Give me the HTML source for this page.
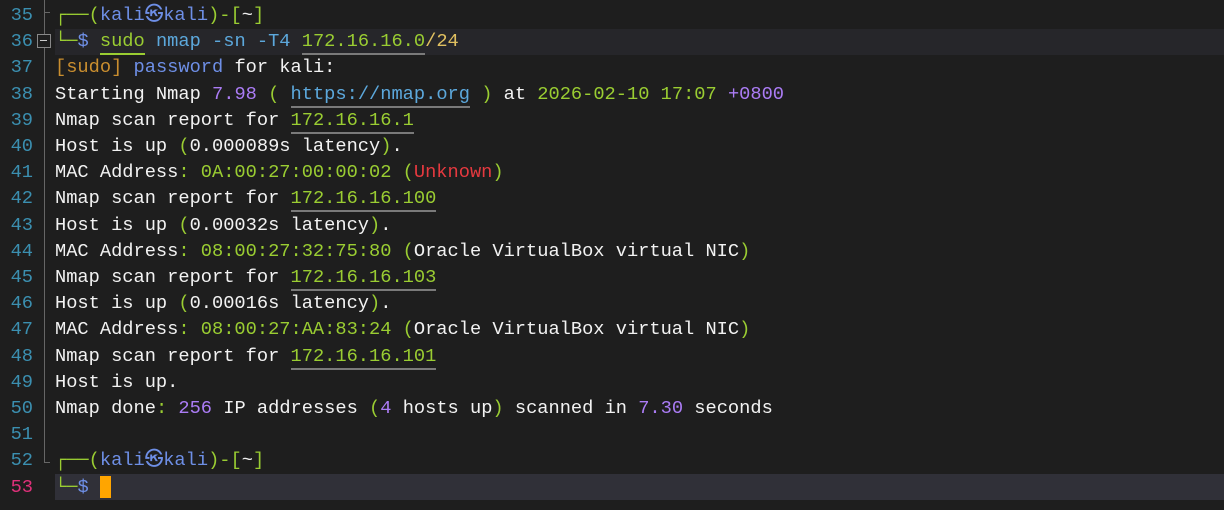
<!DOCTYPE html><html><head><style>
body{margin:0;width:1224px;height:510px;background:#1e1e1e;overflow:hidden;font-family:"Liberation Mono","DejaVu Sans Mono",monospace;font-size:18.7px}
.l{position:absolute;left:0;height:26px;line-height:26px;width:1224px;white-space:pre}
.n{position:absolute;left:0;width:33px;text-align:right;color:#3b8fb0}
.t{position:absolute;left:55px;color:#f2f2f2}
.g{color:#9acd32}.p{color:#ab7cf5}.b{color:#6e8fe6}.y{color:#c98e2f}.r{color:#e5393f}.c{color:#5ca8dc}
.u{position:relative}
.u::after{content:"";position:absolute;left:0;right:0;bottom:-3px;height:2px;background:#7a7a7a}
.ug{position:relative}
.ug::after{content:"";position:absolute;left:0;right:0;bottom:-3px;height:2px;background:#9acd32}
.k{display:inline-block;width:18.5px;text-align:center}
</style></head><body>
<div style="position:absolute;left:44px;top:0;width:1px;height:462px;background:#666"></div>
<div style="position:absolute;left:44px;top:462px;width:6px;height:1px;background:#666"></div>
<div style="position:absolute;left:44px;top:12px;width:6px;height:1px;background:#666"></div>
<div style="position:absolute;left:55px;top:29px;width:1169px;height:26px;background:#26262a"></div>
<div style="position:absolute;left:55px;top:474px;width:1169px;height:26px;background:#303038"></div>
<div style="position:absolute;left:37px;top:34px;width:12px;height:12px;border:1px solid #888;background:#1e1e1e"></div>
<div style="position:absolute;left:40px;top:40px;width:7px;height:1px;background:#ccc"></div>
<div id="c"></div>
<script>
const K='<span class="b">kali<span class="k">㉿</span>kali</span>';
const L=[
[35,'<span class="g">┌──(</span>'+K+'<span class="g">)-[</span><span style="color:#eee">~</span><span class="g">]</span>'],
[36,'<span class="g">└─</span><span class="b">$ </span><span class="g ug">sudo</span> <span class="c">nmap -sn -T4</span> <span class="g u">172.16.16.0</span><span style="color:#e0c060">/24</span>'],
[37,'<span class="y">[sudo]</span> <span class="b">password</span> for kali:'],
[38,'Starting Nmap <span class="p">7.98</span> <span class="g">(</span> <span class="c u">https://nmap.org</span> <span class="g">)</span> at <span class="g">2026-02-10</span> <span class="g">17:07</span> <span class="p">+0800</span>'],
[39,'Nmap scan report for <span class="g u">172.16.16.1</span>'],
[40,'Host is up <span class="g">(</span>0.000089s latency<span class="g">)</span>.'],
[41,'MAC Address<span class="g">: 0A:00:27:00:00:02</span> <span class="g">(</span><span class="r">Unknown</span><span class="g">)</span>'],
[42,'Nmap scan report for <span class="g u">172.16.16.100</span>'],
[43,'Host is up <span class="g">(</span>0.00032s latency<span class="g">)</span>.'],
[44,'MAC Address<span class="g">: 08:00:27:32:75:80</span> <span class="g">(</span>Oracle VirtualBox virtual NIC<span class="g">)</span>'],
[45,'Nmap scan report for <span class="g u">172.16.16.103</span>'],
[46,'Host is up <span class="g">(</span>0.00016s latency<span class="g">)</span>.'],
[47,'MAC Address<span class="g">: 08:00:27:AA:83:24</span> <span class="g">(</span>Oracle VirtualBox virtual NIC<span class="g">)</span>'],
[48,'Nmap scan report for <span class="g u">172.16.16.101</span>'],
[49,'Host is up.'],
[50,'Nmap done<span class="g">:</span> <span class="p">256</span> IP addresses <span class="g">(</span><span class="p">4</span> hosts up<span class="g">)</span> scanned in <span class="p">7.30</span> seconds'],
[51,''],
[52,'<span class="g">┌──(</span>'+K+'<span class="g">)-[</span><span style="color:#eee">~</span><span class="g">]</span>'],
[53,'<span class="g">└─</span><span class="b">$ </span><span style="background:#ffa500"> </span>']];
let h='';L.forEach(([n,s],i)=>{h+=`<div class="l" style="top:${Math.round(2+i*26.2)}px"><span class="n" ${n==53?'style="color:#e0307a"':''}>${n}</span><span class="t">${s}</span></div>`});
document.getElementById('c').innerHTML=h;
</script>
</body></html>
